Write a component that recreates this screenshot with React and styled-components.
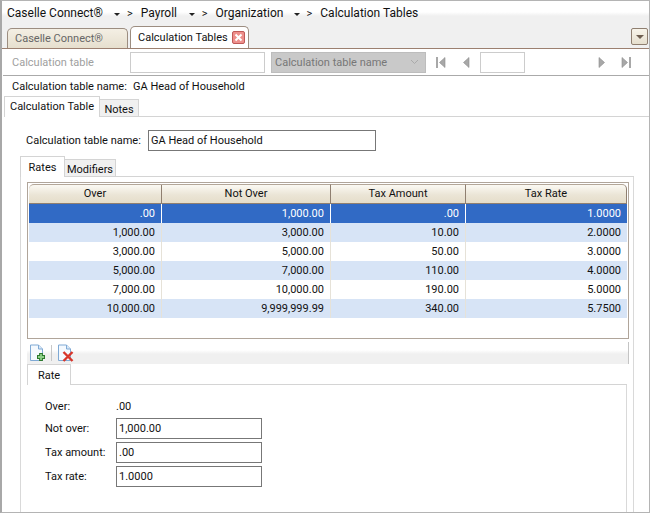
import React from 'react';
import styled, { createGlobalStyle } from 'styled-components';

const GlobalStyle = createGlobalStyle`
  html, body {
    margin: 0;
    padding: 0;
    background: #fff;
  }
`;

// white above, fading into flat grey over four rows
const fadeBand = (top) => `linear-gradient(#fff 0 ${top}px, #f0f0f0 ${top + 4}px 100%)`;

const Window = styled.div`
  width: 650px;
  height: 513px;
  box-sizing: border-box;
  overflow: hidden;
  display: flex;
  flex-direction: column;
  background: #fff;
  border-top: 1px solid #b4b4b4;
  border-left: 2px solid #a8a8a8;
  border-right: 1px solid #b4b4b4;
  border-bottom: 1px solid #b4b4b4;
  font-family: Roboto, "Liberation Sans", sans-serif;
  font-size: 11px;
  color: #111;
`;

const Header = styled.div`
  height: 47px;
  flex: none;
  display: flex;
  flex-direction: column;
  background: #f0f0f0;
`;

const Breadcrumb = styled.div`
  height: 24px;
  flex: none;
  box-sizing: border-box;
  padding-left: 5px;
  display: flex;
  align-items: center;
  background: ${fadeBand(11)};
  font-size: 12px;
`;

const Crumb = styled.span`
  width: ${(p) => p.$w}px;
  flex: none;
`;

const Caret = styled.span`
  width: 0;
  height: 0;
  border-left: 3px solid transparent;
  border-right: 3px solid transparent;
  border-top: 3px solid #222;
  margin: 2px 7px 0 0;
`;

const Sep = styled.span`
  font-size: 11px;
  margin-right: 8px;
`;

const TabStrip = styled.div`
  flex: 1;
  display: flex;
  align-items: flex-end;
  padding-left: 5px;
  gap: 2px;
  position: relative;
`;

const AppTab = styled.div`
  height: ${(p) => (p.$active ? 22 : 20)}px;
  width: ${(p) => (p.$active ? 119 : 121)}px;
  box-sizing: border-box;
  border: 1px solid #9c8d80;
  border-bottom: none;
  border-radius: 5px 5px 0 0;
  display: flex;
  align-items: center;
  justify-content: space-between;
  padding: 0 3px 0 7px;
  color: ${(p) => (p.$active ? '#111' : '#666')};
  background: ${(p) => (p.$active ? '#fff' : 'linear-gradient(#f4efe4, #e6dfce)')};
`;

const CloseBox = styled.span`
  width: 13px;
  height: 13px;
  box-sizing: border-box;
  display: flex;
  align-items: center;
  justify-content: center;
  border-radius: 2px;
  border: 1px solid #c05a58;
  background: #ee8f8b;
`;

const MenuButton = styled.div`
  position: absolute;
  right: 1px;
  bottom: 3px;
  width: 15px;
  height: 15px;
  border: 1px solid #8f7f70;
  border-radius: 2px;
  background: linear-gradient(#f8f4ea, #e6dfce);
  display: flex;
  align-items: center;
  justify-content: center;

  &::after {
    content: '';
    border-left: 4px solid transparent;
    border-right: 4px solid transparent;
    border-top: 4px solid #6f5f50;
  }
`;

const Content = styled.div`
  flex: 1;
  min-height: 0;
  display: flex;
  flex-direction: column;
  border-top: 1px solid #9c8070;
  padding-left: 1px;
`;

const Toolbar = styled.div`
  height: 26px;
  flex: none;
  display: flex;
  align-items: center;
  border-bottom: 1px solid #aaa;
  color: #a0a0a0;
`;

const ToolLabel = styled.span`
  width: 118px;
  padding-left: 9px;
`;

const GhostInput = styled.div`
  width: ${(p) => p.$w}px;
  height: 21px;
  margin-left: ${(p) => p.$left || 0}px;
  box-sizing: border-box;
  border: 1px solid #ccc;
  background: #fff;
`;

const Combo = styled.div`
  width: 155px;
  height: 21px;
  margin-left: 6px;
  box-sizing: border-box;
  border: 1px solid #bdbdbd;
  background: #c9c9c9;
  color: #777;
  display: flex;
  align-items: center;
  justify-content: space-between;
  padding: 0 6px 0 3px;
`;

const NavGroup = styled.div`
  display: flex;
  align-items: center;
  margin-left: ${(p) => p.$left}px;
  gap: ${(p) => p.$gap}px;
`;

const NameRow = styled.div`
  height: 20px;
  flex: none;
  display: flex;
  align-items: center;
  padding-left: 9px;
`;

const Label = styled.span`
  width: ${(p) => p.$w}px;
  flex: none;
`;

const TabRow = styled.div`
  display: flex;
  align-items: flex-end;
  flex: none;
  height: ${(p) => p.$h}px;
  margin-top: ${(p) => p.$top || 0}px;
  margin-left: ${(p) => p.$left || 0}px;
  margin-right: ${(p) => p.$right || 0}px;
  box-shadow: inset 0 -1px 0 #d4d4d4;
`;

const Tab = styled.div`
  box-sizing: border-box;
  width: ${(p) => p.$w}px;
  height: ${(p) => (p.$active ? p.$h : p.$h - 3)}px;
  display: flex;
  align-items: center;
  justify-content: center;
  border: 1px solid #d4d4d4;
  border-left-width: ${(p) => (p.$active ? 1 : 0)}px;
  border-bottom: ${(p) => (p.$active ? 'none' : '1px solid #d4d4d4')};
  background: ${(p) => (p.$active ? '#fff' : '#f0f0f0')};
  padding-top: ${(p) => (p.$active ? 0 : 2)}px;
  padding-bottom: ${(p) => p.$lift || 0}px;
`;

const FormPanel = styled.div`
  flex: 1;
  min-height: 0;
  display: flex;
  flex-direction: column;
  padding: 13px 15px 0 17px;
`;

const NameField = styled.div`
  display: flex;
  align-items: center;
  height: 21px;
  flex: none;
  padding-left: 6px;
`;

const TextBox = styled.div`
  box-sizing: border-box;
  width: ${(p) => p.$w}px;
  height: 21px;
  border: 1px solid #777;
  background: #fff;
  display: flex;
  align-items: center;
  padding-left: 2px;
`;

const InnerPanel = styled.div`
  flex: 1;
  min-height: 0;
  display: flex;
  flex-direction: column;
  border-left: 1px solid #d9d9d9;
  border-right: 1px solid #d9d9d9;
  padding: 5px 4px 0 6px;
`;

const Grid = styled.div`
  height: 157px;
  flex: none;
  box-sizing: border-box;
  border: 1px solid #b0a59a;
  padding: 1px 1px 0;
  background: #fff;
`;

const GridRow = styled.div`
  display: grid;
  grid-template-columns: 133px 169px 135px 1fr;
  height: ${(p) => (p.$header ? 20 : 19)}px;
  background: ${(p) => (p.$selected ? '#316ac5' : p.$odd ? '#d7e4f6' : '#fff')};
  color: ${(p) => (p.$selected ? '#fff' : '#111')};
`;

const HeadCell = styled.div`
  display: flex;
  align-items: center;
  justify-content: center;
  border-right: 1px solid #8f7f70;
  border-bottom: 1px solid #8f7f70;
  border-top: 1px solid #b3a698;
  background: linear-gradient(#fbf9f3, #ebe5d6 55%, #e5ddca);
  border-radius: ${(p) => p.$round || '0'};
  padding-bottom: 1px;
`;

const Cell = styled.div`
  display: flex;
  align-items: center;
  justify-content: flex-end;
  padding-right: 6px;
  border-right: 1px solid ${(p) => (p.$selected ? '#fff' : '#e6e2d8')};

  &:last-child {
    border-right: none;
  }
`;

const MiniToolbar = styled.div`
  height: 22px;
  flex: none;
  margin-top: 3px;
  display: flex;
  align-items: center;
  gap: 5px;
  padding-left: 2px;
  border-right: 1px solid #c4c4c4;
  background: ${fadeBand(8)};
`;

const ToolDivider = styled.span`
  width: 1px;
  height: 16px;
  background: #c8c8c8;
`;

const RatePanel = styled.div`
  flex: 1;
  min-height: 0;
  margin-right: 2px;
  border-right: 1px solid #d9d9d9;
  padding: 9px 0 0 18px;
  display: grid;
  grid-template-columns: 71px 146px;
  grid-auto-rows: 21px;
  row-gap: 3px;
  align-items: center;
  align-content: start;
`;

const ReadOnlyText = styled.span`
  padding-top: 3px;
`;

const columns = ['Over', 'Not Over', 'Tax Amount', 'Tax Rate'];

const rates = [
  ['.00', '1,000.00', '.00', '1.0000'],
  ['1,000.00', '3,000.00', '10.00', '2.0000'],
  ['3,000.00', '5,000.00', '50.00', '3.0000'],
  ['5,000.00', '7,000.00', '110.00', '4.0000'],
  ['7,000.00', '10,000.00', '190.00', '5.0000'],
  ['10,000.00', '9,999,999.99', '340.00', '5.7500'],
];

const NavIcon = ({ flip, bar }) => (
  <svg width="12" height="13" viewBox="0 0 12 13" style={{ transform: flip ? 'scaleX(-1)' : undefined }}>
    {bar && <rect x="1" y="1" width="2" height="11" fill="#a8a8a8" />}
    <path d="M10 1.5 L4.5 6.5 L10 11.5 Z" fill="#a8a8a8" stroke="#8c8c8c" strokeWidth="0.6" />
  </svg>
);

const PageIcon = ({ children }) => (
  <svg width="17" height="18" viewBox="0 0 17 18">
    <path d="M1.5 1 H9.5 L13.5 5 V16.5 H1.5 Z" fill="#f4f9fe" stroke="#7fa9d4" />
    <path d="M9.5 1 V5 H13.5" fill="#d8e8f7" stroke="#7fa9d4" />
    {children}
  </svg>
);

const App = () => (
  <>
    <GlobalStyle />
    <Window>
      <Header>
        <Breadcrumb>
          <Crumb $w={107}>Caselle Connect®</Crumb>
          <Caret />
          <Sep>&gt;</Sep>
          <Crumb $w={48}>Payroll</Crumb>
          <Caret />
          <Sep>&gt;</Sep>
          <Crumb $w={78}>Organization</Crumb>
          <Caret />
          <Sep>&gt;</Sep>
          <Crumb $w={100}>Calculation Tables</Crumb>
        </Breadcrumb>
        <TabStrip>
          <AppTab>Caselle Connect®</AppTab>
          <AppTab $active>
            Calculation Tables
            <CloseBox>
              <svg width="9" height="9" viewBox="0 0 9 9">
                <path d="M1.5 1.5 L7.5 7.5 M7.5 1.5 L1.5 7.5" stroke="#fff" strokeWidth="2" />
              </svg>
            </CloseBox>
          </AppTab>
          <MenuButton />
        </TabStrip>
      </Header>
      <Content>
        <Toolbar>
          <ToolLabel>Calculation table</ToolLabel>
          <GhostInput $w={135} />
          <Combo>
            Calculation table name
            <svg width="9" height="6" viewBox="0 0 9 6">
              <path d="M1 1 L4.5 4.5 L8 1" fill="none" stroke="#aaa" />
            </svg>
          </Combo>
          <NavGroup $left={9} $gap={12}>
            <NavIcon bar />
            <NavIcon />
          </NavGroup>
          <GhostInput $w={45} $left={9} />
          <NavGroup $left={72} $gap={11}>
            <NavIcon flip />
            <NavIcon flip bar />
          </NavGroup>
        </Toolbar>
        <NameRow>
          <Label $w={121}>Calculation table name:</Label>
          <span>GA Head of Household</span>
        </NameRow>
        <TabRow $h={21} $left={1}>
          <Tab $active $w={96} $h={21} $lift={2}>Calculation Table</Tab>
          <Tab $w={39} $h={21}>Notes</Tab>
        </TabRow>
        <FormPanel>
          <NameField>
            <Label $w={122}>Calculation table name:</Label>
            <TextBox $w={228}>GA Head of Household</TextBox>
          </NameField>
          <TabRow $h={21} $top={5}>
            <Tab $active $w={45} $h={21}>Rates</Tab>
            <Tab $w={51} $h={21}>Modifiers</Tab>
          </TabRow>
          <InnerPanel>
            <Grid>
              <GridRow $header>
                {columns.map((col, i) => (
                  <HeadCell key={col} $round={i === 0 ? '5px 0 0 0' : i === 3 ? '0 5px 0 0' : '0'}>
                    {col}
                  </HeadCell>
                ))}
              </GridRow>
              {rates.map((row, r) => (
                <GridRow key={row[0]} $selected={r === 0} $odd={r % 2 === 1}>
                  {row.map((val, c) => (
                    <Cell key={c} $selected={r === 0}>{val}</Cell>
                  ))}
                </GridRow>
              ))}
            </Grid>
            <MiniToolbar>
              <PageIcon>
                <path d="M12 9 V17 M8 13 H16" stroke="#2d7a2d" strokeWidth="3.8" />
                <path d="M12 10 V16 M9 13 H15" stroke="#8fd08a" strokeWidth="1.8" />
              </PageIcon>
              <ToolDivider />
              <PageIcon>
                <path d="M6.5 8 L15.5 17 M15.5 8 L6.5 17" stroke="#d8362a" strokeWidth="2.4" />
              </PageIcon>
            </MiniToolbar>
            <TabRow $h={21} $right={2}>
              <Tab $active $w={44} $h={21}>Rate</Tab>
            </TabRow>
            <RatePanel>
              <ReadOnlyText>Over:</ReadOnlyText>
              <ReadOnlyText>.00</ReadOnlyText>
              <span>Not over:</span>
              <TextBox $w={146}>1,000.00</TextBox>
              <span>Tax amount:</span>
              <TextBox $w={146}>.00</TextBox>
              <span>Tax rate:</span>
              <TextBox $w={146}>1.0000</TextBox>
            </RatePanel>
          </InnerPanel>
        </FormPanel>
      </Content>
    </Window>
  </>
);

export default App;
